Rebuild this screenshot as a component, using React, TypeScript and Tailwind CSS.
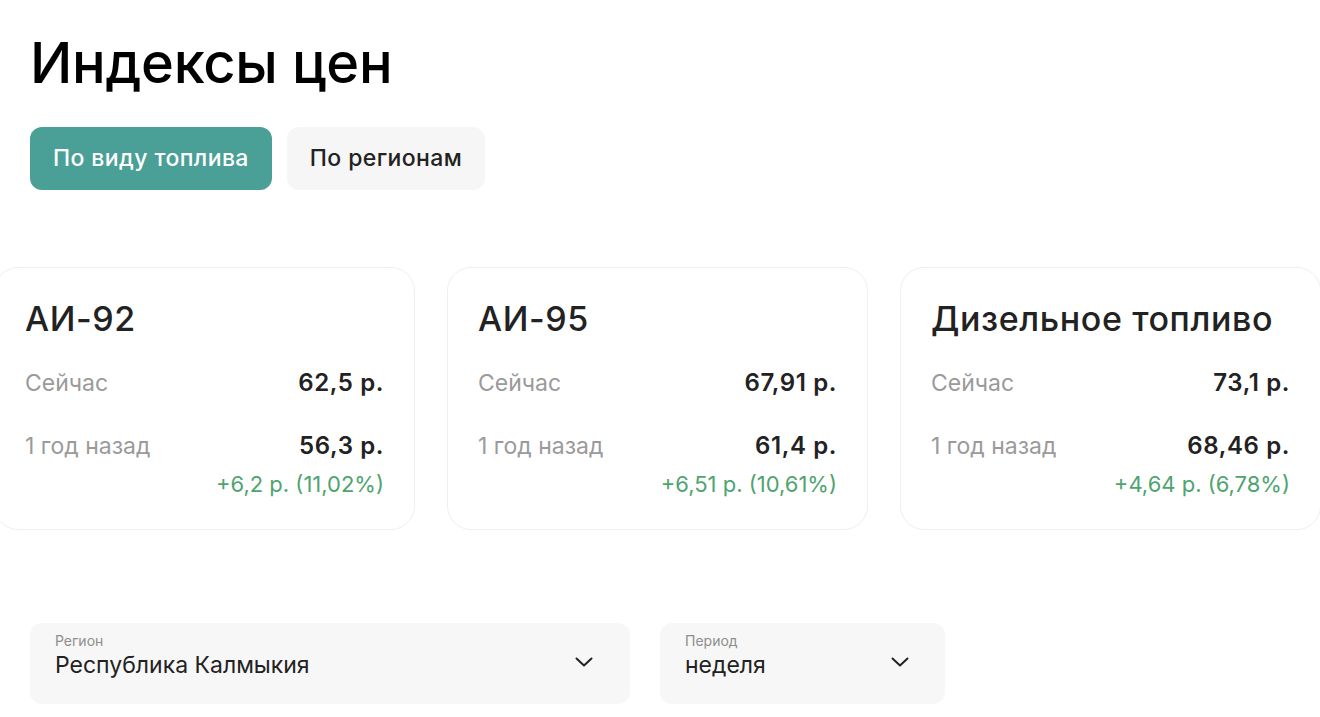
import React from "react";

const cards = [
  { title: "АИ-92", now: "62,5 р.", ago: "56,3 р.", diff: "+6,2 р. (11,02%)" },
  { title: "АИ-95", now: "67,91 р.", ago: "61,4 р.", diff: "+6,51 р. (10,61%)" },
  { title: "Дизельное топливо", now: "73,1 р.", ago: "68,46 р.", diff: "+4,64 р. (6,78%)" },
];

function Chevron() {
  return (
    <svg width="18" height="10" viewBox="0 0 18 10" fill="none">
      <path d="M1.5 1.5L9 8.5L16.5 1.5" stroke="#222" strokeWidth="2" strokeLinecap="round" strokeLinejoin="round" />
    </svg>
  );
}

export default function App() {
  return (
    <div
      className="w-[1320px] h-[717px] overflow-hidden bg-white text-[#222]"
      style={{ fontFamily: "Inter, 'Noto Sans', sans-serif" }}
    >
      <div className="pl-[30px] pt-[35px]">
        <h1 className="text-[56px] leading-[56px] font-medium text-black tracking-[-0.3px]">Индексы цен</h1>
        <div className="flex gap-[15px] mt-[36px]">
          <button className="h-[63px] px-[23px] rounded-[12px] bg-[#4a9f96] text-white text-[23px] font-medium tracking-[0.4px]">
            По виду топлива
          </button>
          <button className="h-[63px] px-[23px] rounded-[12px] bg-[#f6f6f6] text-[#222] text-[23px] font-medium tracking-[0.4px]">
            По регионам
          </button>
        </div>
      </div>

      <div className="flex gap-[32px] ml-[-6px] mt-[77px]">
        {cards.map((c) => (
          <div
            key={c.title}
            className="w-[421px] h-[263px] shrink-0 rounded-[24px] border border-[#efefef] pt-[33px] px-[30px]"
          >
            <div className="text-[34px] leading-[36px] font-medium text-[#222] tracking-[0.6px]">{c.title}</div>
            <div className="mt-[30px] flex items-baseline justify-between h-[32px]">
              <span className="text-[23px] leading-[32px] text-[#9a9a9a]">Сейчас</span>
              <span className="text-[24px] leading-[32px] font-semibold text-[#222] tracking-[0.6px]">{c.now}</span>
            </div>
            <div className="mt-[31px] flex items-baseline justify-between h-[32px]">
              <span className="text-[23px] leading-[32px] text-[#9a9a9a]">1 год назад</span>
              <span className="text-[24px] leading-[32px] font-semibold text-[#222] tracking-[0.6px]">{c.ago}</span>
            </div>
            <div className="mt-[6px] flex justify-end">
              <span className="text-[22px] leading-[32px] text-[#4ea46e]">{c.diff}</span>
            </div>
          </div>
        ))}
      </div>

      <div className="flex gap-[30px] pl-[30px] mt-[93px]">
        <div className="w-[600px] h-[81px] rounded-[12px] bg-[#f7f7f7] pl-[25px] pr-[37px] pt-[10px] flex items-start justify-between">
          <div>
            <div className="text-[14px] leading-[16px] text-[#8e8e8e]">Регион</div>
            <div className="text-[23px] leading-[28px] mt-[2px] text-[#222]">Республика Калмыкия</div>
          </div>
          <div className="mt-[24px]"><Chevron /></div>
        </div>
        <div className="w-[285px] h-[81px] rounded-[12px] bg-[#f7f7f7] pl-[25px] pr-[36px] pt-[10px] flex items-start justify-between">
          <div>
            <div className="text-[14px] leading-[16px] text-[#8e8e8e]">Период</div>
            <div className="text-[23px] leading-[28px] mt-[2px] text-[#222]">неделя</div>
          </div>
          <div className="mt-[24px]"><Chevron /></div>
        </div>
      </div>
    </div>
  );
}
